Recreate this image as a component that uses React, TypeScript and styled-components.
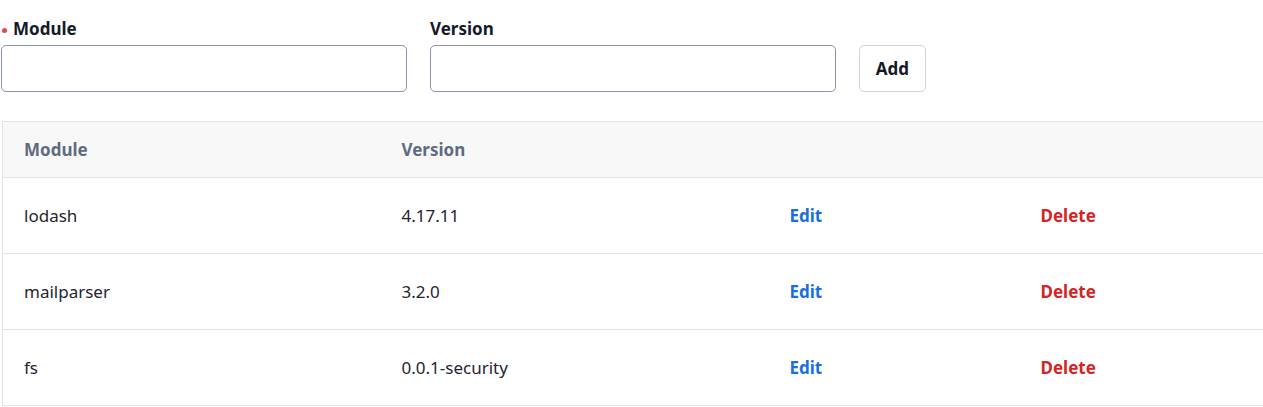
import React from "react";
import styled, { createGlobalStyle } from "styled-components";

const Global = createGlobalStyle`
  html, body { margin: 0; padding: 0; background: #fff; overflow: hidden; }
  body { font-family: "Noto Sans", "Open Sans", sans-serif; color: #1f2430; }
`;

const Page = styled.div`
  padding: 17px 0 0 1px;
`;

const FormRow = styled.div`
  display: flex;
  align-items: flex-end;
  gap: 23px;
`;

const Field = styled.div`
  display: flex;
  flex-direction: column;
  width: 406px;
`;

const Label = styled.label<{ $required?: boolean }>`
  display: flex;
  align-items: center;
  font-size: 17px;
  font-weight: 700;
  line-height: 24px;
  height: 24px;
  margin-bottom: 4px;
  color: #141a26;
  &::before {
    content: ${(p) => (p.$required ? '""' : "none")};
    width: 5px;
    height: 5px;
    border-radius: 50%;
    background: #e0484a;
    margin: 2px 6px 0 1px;
  }
`;

const Input = styled.input`
  box-sizing: border-box;
  height: 47px;
  width: 100%;
  border: 1px solid #8b94ad;
  border-radius: 5px;
  font-size: 17px;
  padding: 0 12px;
  outline: none;
  background: #fff;
`;

const Button = styled.button`
  box-sizing: border-box;
  height: 47px;
  width: 67px;
  border: 1px solid #d3d4dc;
  border-radius: 5px;
  background: #fff;
  font-family: "Noto Sans", sans-serif;
  font-size: 17px;
  font-weight: 700;
  color: #141a26;
  cursor: pointer;
`;

const Table = styled.table`
  margin-top: 29px;
  margin-left: 1px;
  width: 1320px;
  border-collapse: collapse;
  table-layout: fixed;
  border: 1px solid #e3e4ea;
`;

const HeadCell = styled.th`
  box-sizing: border-box;
  height: 56px;
  background: #f8f8f8;
  text-align: left;
  padding: 0 0 0 21px;
  font-size: 17px;
  font-weight: 700;
  color: #5f6b80;
  border-bottom: 1px solid #e3e4ea;
`;

const Row = styled.tr`
  border-bottom: 1px solid #e3e4ea;
`;

const Cell = styled.td`
  height: 75px;
  padding: 0 0 0 21px;
  font-size: 17px;
  font-family: "Noto Sans", sans-serif;
  color: #1f2430;
`;

const ActionLink = styled.a<{ $danger?: boolean }>`
  font-family: "Noto Sans", sans-serif;
  font-weight: 700;
  font-size: 17px;
  text-decoration: none;
  cursor: pointer;
  color: ${(p) => (p.$danger ? "#d42424" : "#1a6fe0")};
`;

const rows = [
  { module: "lodash", version: "4.17.11" },
  { module: "mailparser", version: "3.2.0" },
  { module: "fs", version: "0.0.1-security" },
];

export default function App() {
  return (
    <Page>
      <Global />
      <FormRow>
        <Field>
          <Label $required>Module</Label>
          <Input />
        </Field>
        <Field>
          <Label>Version</Label>
          <Input />
        </Field>
        <Button>Add</Button>
      </FormRow>
      <Table>
        <colgroup>
          <col style={{ width: 378 }} />
          <col style={{ width: 388 }} />
          <col style={{ width: 251 }} />
          <col />
        </colgroup>
        <thead>
          <tr>
            <HeadCell>Module</HeadCell>
            <HeadCell>Version</HeadCell>
            <HeadCell />
            <HeadCell />
          </tr>
        </thead>
        <tbody>
          {rows.map((r) => (
            <Row key={r.module}>
              <Cell>{r.module}</Cell>
              <Cell>{r.version}</Cell>
              <Cell>
                <ActionLink>Edit</ActionLink>
              </Cell>
              <Cell>
                <ActionLink $danger>Delete</ActionLink>
              </Cell>
            </Row>
          ))}
        </tbody>
      </Table>
    </Page>
  );
}
